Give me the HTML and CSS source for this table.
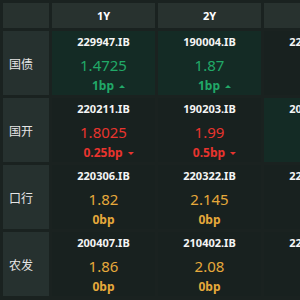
FILE: index.html
```html
<!DOCTYPE html>
<html lang="zh">
<head>
<meta charset="utf-8">
<link rel="stylesheet" href="styles.css">
</head>
<body>
<div class="grid">
  <div class="corner"></div>
  <div class="head">1Y</div>
  <div class="head">2Y</div>
  <div class="head">3Y</div>

  <div class="label">国债</div>
  <div class="cell hl"><div class="tk">229947.IB</div><div class="val up">1.4725</div><div class="chg up arrowed">1bp<span class="tri-up"></span></div></div>
  <div class="cell hl"><div class="tk">190004.IB</div><div class="val up">1.87</div><div class="chg up arrowed">1bp<span class="tri-up"></span></div></div>
  <div class="cell"><div class="tk">220215.IB</div><div class="val flat">2.06</div><div class="chg flat">0bp</div></div>

  <div class="label">国开</div>
  <div class="cell"><div class="tk">220211.IB</div><div class="val down">1.8025</div><div class="chg down arrowed">0.25bp<span class="tri-down"></span></div></div>
  <div class="cell"><div class="tk">190203.IB</div><div class="val down">1.99</div><div class="chg down arrowed">0.5bp<span class="tri-down"></span></div></div>
  <div class="cell hl"><div class="tk">200215.IB</div><div class="val up">2.17</div><div class="chg up arrowed">1bp<span class="tri-up"></span></div></div>

  <div class="label">口行</div>
  <div class="cell"><div class="tk">220306.IB</div><div class="val flat">1.82</div><div class="chg flat">0bp</div></div>
  <div class="cell"><div class="tk">220322.IB</div><div class="val flat">2.145</div><div class="chg flat">0bp</div></div>
  <div class="cell"><div class="tk">220312.IB</div><div class="val flat">2.26</div><div class="chg flat">0bp</div></div>

  <div class="label">农发</div>
  <div class="cell"><div class="tk">200407.IB</div><div class="val flat">1.86</div><div class="chg flat">0bp</div></div>
  <div class="cell"><div class="tk">210402.IB</div><div class="val flat">2.08</div><div class="chg flat">0bp</div></div>
  <div class="cell"><div class="tk">220411.IB</div><div class="val up">2.23</div><div class="chg up">0bp</div></div>
</div>
</body>
</html>
```
FILE: styles.css
```css
html, body {
  margin: 0;
  padding: 0;
  background: #1a2220;
  overflow: hidden;
  width: 300px;
  height: 300px;
}
body {
  font-family: "Noto Sans", "Noto Sans CJK SC", sans-serif;
}
.grid {
  display: grid;
  grid-template-columns: 46px 103px 103px 103px;
  grid-template-rows: 25px 64px 64px 64px 64px;
  gap: 3px;
  padding: 3px;
  width: max-content;
}
.corner, .head {
  background: #28322f;
}
.head {
  color: #ffffff;
  font-weight: bold;
  font-size: 11px;
  display: flex;
  align-items: center;
  justify-content: center;
}
.label {
  background: #26312f;
  color: #e6e6e6;
  font-size: 12px;
  display: flex;
  align-items: center;
  padding-left: 6px;
  font-family: "Noto Sans CJK SC", sans-serif;
}
.cell {
  background: #18211f;
  display: flex;
  flex-direction: column;
  align-items: center;
  padding-top: 1px;
}
.cell.hl {
  background: #142b25;
}
.tk {
  color: #f4f4f4;
  font-weight: bold;
  font-size: 11px;
  line-height: 20px;
}
.val {
  font-size: 15px;
  line-height: 24px;
  margin-top: 1px;
}
.chg {
  font-weight: bold;
  font-size: 12px;
  line-height: 16px;
  margin-top: 1px;
  display: flex;
  align-items: center;
}
.chg.arrowed {
  padding-left: 10px;
}
.up { color: #21a968; }
.down { color: #e8342e; }
.flat { color: #e6a93b; }
.tri-up, .tri-down {
  display: inline-block;
  width: 0;
  height: 0;
  margin-left: 5px;
  border-left: 3px solid transparent;
  border-right: 3px solid transparent;
}
.tri-up {
  border-bottom: 3px solid #21a968;
}
.tri-down {
  border-top: 3px solid #e8342e;
}
```
